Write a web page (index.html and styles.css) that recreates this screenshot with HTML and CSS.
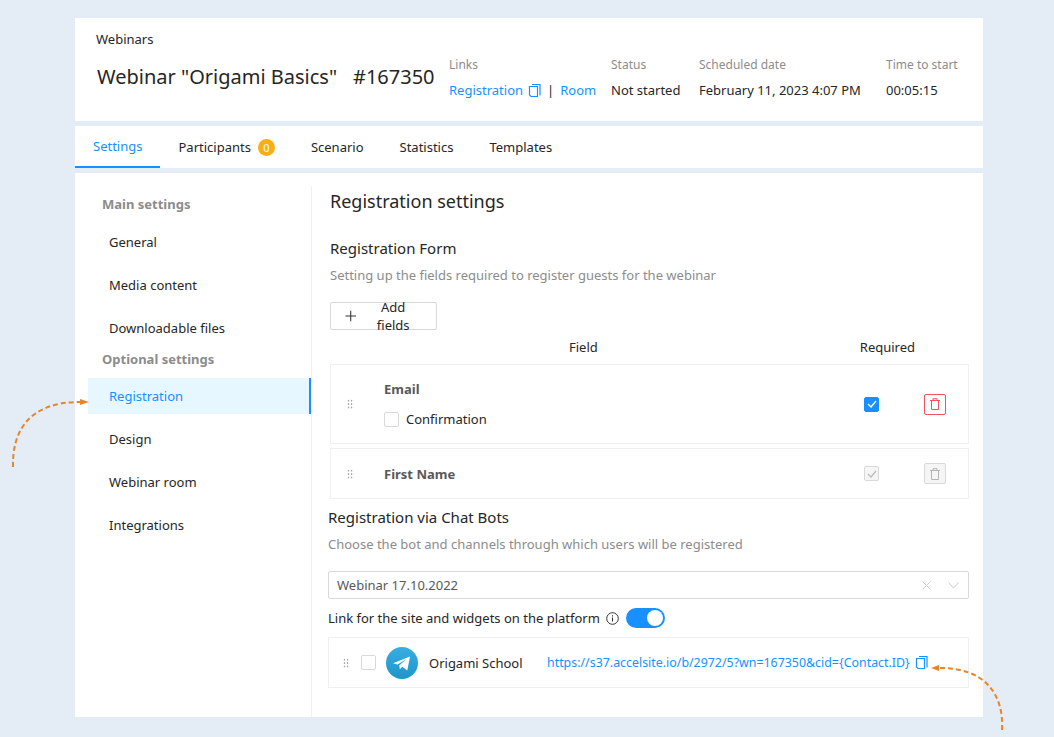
FILE: index.html
```html
<!DOCTYPE html>
<html>
<head>
  <title>Webinar settings</title>
  <link rel="stylesheet" href="styles.css">
</head>
<body>
  <svg class="arrow arrow-left" width="90" height="80" viewBox="0 0 90 80">
    <path d="M13 67 C12 30 30 2 80 2" fill="none" stroke="#e8852b" stroke-width="2" stroke-dasharray="5 3"/>
    <path d="M89 2 L80 -1 L80 5 Z" fill="#e8852b"/>
  </svg>
  <svg class="arrow arrow-right" width="80" height="70" viewBox="0 0 80 70">
    <path d="M72 66 C74 30 55 4 10 4" fill="none" stroke="#e8852b" stroke-width="2" stroke-dasharray="5 3"/>
    <path d="M1 4 L9 1 L9 7 Z" fill="#e8852b"/>
  </svg>

  <div class="page">
    <header class="head">
      <div class="crumb">Webinars</div>
      <div class="head-row">
        <h1 class="title">Webinar "Origami Basics"</h1>
        <div class="number">#167350</div>
        <div class="info info-links">
          <div class="info-label">Links</div>
          <div class="info-value">
            <a class="link">Registration</a>
            <svg class="copy" width="13" height="15" viewBox="0 0 13 15"><path d="M4 1.5h8v11" fill="none" stroke="#1890ff" stroke-width="1.2"/><path d="M1.5 3.5h8v10h-6.5l-1.5-1.5z" fill="none" stroke="#1890ff" stroke-width="1.2"/></svg>
            <span class="sep">|</span>
            <a class="link">Room</a>
          </div>
        </div>
        <div class="info info-status">
          <div class="info-label">Status</div>
          <div class="info-value">Not started</div>
        </div>
        <div class="info info-date">
          <div class="info-label">Scheduled date</div>
          <div class="info-value">February 11, 2023 4:07 PM</div>
        </div>
        <div class="info">
          <div class="info-label">Time to start</div>
          <div class="info-value">00:05:15</div>
        </div>
      </div>
    </header>

    <nav class="tabs">
      <a class="tab active">Settings</a>
      <a class="tab">Participants <span class="badge">0</span></a>
      <a class="tab">Scenario</a>
      <a class="tab">Statistics</a>
      <a class="tab">Templates</a>
    </nav>

    <div class="content">
      <aside class="side">
        <div class="side-title">Main settings</div>
        <a class="side-item">General</a>
        <a class="side-item">Media content</a>
        <a class="side-item">Downloadable files</a>
        <div class="side-title side-title-2">Optional settings</div>
        <a class="side-item active">Registration</a>
        <a class="side-item">Design</a>
        <a class="side-item">Webinar room</a>
        <a class="side-item">Integrations</a>
      </aside>

      <main class="main">
        <h2 class="main-title">Registration settings</h2>
        <h3 class="sub-title">Registration Form</h3>
        <p class="hint">Setting up the fields required to register guests for the webinar</p>
        <button class="btn">
          <svg width="12" height="12" viewBox="0 0 12 12"><path d="M6 .5v11M.5 6h11" stroke="#333" stroke-width="1.1"/></svg>
          Add fields
        </button>

        <div class="field-head">
          <span class="field-head-name">Field</span>
          <span class="field-head-req">Required</span>
        </div>

        <div class="field-row field-row-tall">
          <span class="drag"></span>
          <div class="field-name">
            <b>Email</b>
            <label class="confirm"><span class="check"></span>Confirmation</label>
          </div>
          <span class="check check-on">
            <svg width="10" height="8" viewBox="0 0 10 8"><path d="M1 4l3 3 5-6" fill="none" stroke="#fff" stroke-width="1.4"/></svg>
          </span>
          <span class="trash trash-red">
            <svg width="10" height="12" viewBox="0 0 10 12"><path d="M0 2.5h10M3 2.5V.7h4v1.8M1.5 2.5v9h7v-9" fill="none" stroke="#f5535b" stroke-width="1"/></svg>
          </span>
        </div>

        <div class="field-row">
          <span class="drag"></span>
          <div class="field-name"><b>First Name</b></div>
          <span class="check check-off">
            <svg width="10" height="8" viewBox="0 0 10 8"><path d="M1 4l3 3 5-6" fill="none" stroke="#bbb" stroke-width="1.3"/></svg>
          </span>
          <span class="trash trash-off">
            <svg width="10" height="12" viewBox="0 0 10 12"><path d="M0 2.5h10M3 2.5V.7h4v1.8M1.5 2.5v9h7v-9" fill="none" stroke="#b5b5b5" stroke-width="1"/></svg>
          </span>
        </div>

        <div class="bots">
          <h3 class="sub-title">Registration via Chat Bots</h3>
          <p class="hint">Choose the bot and channels through which users will be registered</p>

          <div class="select">
            <span>Webinar 17.10.2022</span>
            <svg class="select-x" width="9" height="9" viewBox="0 0 9 9"><path d="M.5.5l8 8M8.5.5l-8 8" stroke="#ccc" stroke-width="1"/></svg>
            <svg width="11" height="7" viewBox="0 0 11 7"><path d="M.5.5l5 5.5 5-5.5" fill="none" stroke="#ccc" stroke-width="1"/></svg>
          </div>

          <div class="platform">
            <span>Link for the site and widgets on the platform</span>
            <svg class="info-ic" width="13" height="13" viewBox="0 0 13 13"><circle cx="6.5" cy="6.5" r="5.8" fill="none" stroke="#333" stroke-width="1"/><path d="M6.5 5.5v4M6.5 3.2v1.2" stroke="#333" stroke-width="1.1"/></svg>
            <span class="toggle"><span class="knob"></span></span>
          </div>

          <div class="bot-row">
            <span class="drag"></span>
            <span class="check"></span>
            <svg class="tg" width="32" height="32" viewBox="0 0 32 32">
              <defs><linearGradient id="tg" x1="0" y1="0" x2="0" y2="1"><stop offset="0" stop-color="#37aee2"/><stop offset="1" stop-color="#1e96c8"/></linearGradient></defs>
              <circle cx="16" cy="16" r="16" fill="url(#tg)"/>
              <path d="M7 16.2 L24 9.5 L21.3 23.5 L16.3 19.8 L13.8 22.3 L13.3 18.3 L21 11.8 L11.5 17.6 Z" fill="#fff"/>
            </svg>
            <span class="bot-name">Origami School</span>
            <a class="link bot-url">https://s37.accelsite.io/b/2972/5?wn=167350&amp;cid={Contact.ID}</a>
            <svg class="copy" width="13" height="15" viewBox="0 0 13 15"><path d="M4 1.5h8v11" fill="none" stroke="#1890ff" stroke-width="1.2"/><path d="M1.5 3.5h8v10h-6.5l-1.5-1.5z" fill="none" stroke="#1890ff" stroke-width="1.2"/></svg>
          </div>
        </div>
      </main>
    </div>
  </div>
</body>
</html>
```

FILE: styles.css
```css
* {
  box-sizing: border-box;
}

html, body {
  height: 100%;
}

body {
  margin: 0;
  background-color: #e4ecf5;
  color: #262626;
  font-family: "Noto Sans", "Open Sans", sans-serif;
  font-size: 13px;
  overflow: hidden;
}

h1, h2, h3, p {
  margin: 0;
  font-weight: 400;
}

.page {
  width: 908px;
  margin: 18px 0 0 75px;
}

.arrow {
  position: absolute;
  overflow: visible;
}

.arrow-left {
  left: 0;
  top: 400px;
}

.arrow-right {
  left: 930px;
  top: 664px;
}

.link {
  color: #1890ff;
}

/* header */

.head {
  background: #fff;
  height: 103px;
  padding: 12px 22px 0 21px;
  margin-bottom: 5px;
}

.crumb {
  line-height: 18px;
}

.head-row {
  display: flex;
  align-items: flex-start;
  margin-top: 8px;
}

.title {
  font-size: 20px;
  line-height: 28px;
  width: 257px;
  padding-top: 7px;
  padding-left: 1px;
}

.number {
  font-size: 20px;
  line-height: 28px;
  width: 96px;
  padding-top: 7px;
}

.info-label {
  color: #8c8c8c;
  font-size: 12px;
  line-height: 18px;
  margin-bottom: 7px;
}

.info-value {
  line-height: 18px;
  display: flex;
  align-items: center;
  gap: 5px;
  white-space: nowrap;
}

.info-links {
  width: 162px;
}

.info-status {
  width: 88px;
}

.info-date {
  width: 187px;
}

.sep {
  margin: 0 1px;
}

/* tabs */

.tabs {
  background: #fff;
  height: 42px;
  display: flex;
  margin-bottom: 5px;
}

.tab {
  padding: 0 18px;
  line-height: 44px;
  height: 42px;
  display: flex;
  align-items: center;
  gap: 7px;
}

.tab.active {
  color: #1890ff;
  border-bottom: 2px solid #1890ff;
}

.badge {
  width: 17px;
  height: 17px;
  border-radius: 50%;
  background: #faad14;
  color: #fff;
  font-size: 11px;
  line-height: 17px;
  text-align: center;
}

/* content */

.content {
  background: #fff;
  height: 544px;
  display: flex;
  padding-top: 13px;
}

.side {
  width: 237px;
  padding: 9px 0 0 13px;
  border-right: 1px solid #f0f0f0;
}

.side-title {
  color: #8c8c8c;
  font-weight: 700;
  line-height: 18px;
  padding-left: 14px;
  margin-bottom: 11px;
}

.side-title-2 {
  margin-top: -3px;
  margin-bottom: 10px;
}

.side-item {
  display: block;
  height: 36px;
  line-height: 36px;
  padding-left: 21px;
  margin-bottom: 7px;
}

.side-item.active {
  background: #e6f7ff;
  color: #1890ff;
  border-right: 2px solid #1890ff;
}

.main {
  flex: 1;
  padding: 0 14px 0 18px;
}

.main-title {
  font-size: 18px;
  line-height: 30px;
}

.sub-title {
  font-size: 15px;
  line-height: 22px;
}

.main-title + .sub-title {
  margin-top: 21px;
}

.hint {
  color: #8c8c8c;
  line-height: 18px;
  margin-top: 7px;
}

.btn {
  display: flex;
  align-items: center;
  gap: 8px;
  height: 28px;
  width: 107px;
  margin-top: 18px;
  padding: 0 14px;
  background: #fff;
  border: 1px solid #d9d9d9;
  border-radius: 2px;
  color: #262626;
  font: inherit;
}

.field-head {
  display: flex;
  height: 34px;
  line-height: 34px;
}

.field-head-name {
  margin-left: 239px;
}

.field-head-req {
  margin-left: 262px;
}

.field-row {
  display: grid;
  grid-template-columns: 37px 1fr 60px 44px;
  align-items: center;
  height: 51px;
  margin-bottom: 4px;
  border: 1px solid #f0f0f0;
  padding-left: 16px;
}

.field-row-tall {
  height: 80px;
}

.field-name b {
  color: #595959;
  line-height: 18px;
  display: block;
}

.confirm {
  display: flex;
  align-items: center;
  gap: 7px;
  margin-top: 12px;
}

.drag {
  display: block;
  width: 7px;
  height: 10px;
  background-image: radial-gradient(circle, #a6a6a6 1px, transparent 1.1px);
  background-size: 3px 3.4px;
}

.check {
  width: 15px;
  height: 15px;
  border: 1px solid #d9d9d9;
  border-radius: 2px;
  display: flex;
  align-items: center;
  justify-content: center;
  flex: none;
}

.check-on {
  background: #1890ff;
  border-color: #1890ff;
}

.check-off {
  background: #f5f5f5;
}

.trash {
  width: 22px;
  height: 21px;
  border: 1px solid #d9d9d9;
  border-radius: 2px;
  display: flex;
  align-items: center;
  justify-content: center;
}

.trash-red {
  border-color: #f5535b;
}

.trash-off {
  background: #f5f5f5;
}

.bots {
  margin-left: -2px;
  margin-top: 7px;
}

.select {
  display: flex;
  align-items: center;
  height: 28px;
  margin-top: 18px;
  padding: 0 9px 0 8px;
  border: 1px solid #d9d9d9;
  border-radius: 2px;
  color: #595959;
}

.select span {
  flex: 1;
}

.select-x {
  margin-right: 17px;
}

.platform {
  display: flex;
  align-items: center;
  height: 20px;
  margin-top: 9px;
}

.info-ic {
  margin-left: 6px;
}

.toggle {
  width: 39px;
  height: 20px;
  margin-left: 7px;
  border-radius: 10px;
  background: #1890ff;
  display: flex;
  justify-content: flex-end;
  padding: 2px;
}

.knob {
  width: 16px;
  height: 16px;
  border-radius: 50%;
  background: #fff;
}

.bot-row {
  display: flex;
  align-items: center;
  height: 51px;
  margin-top: 9px;
  padding-left: 14px;
  border: 1px solid #f0f0f0;
}

.bot-row .check {
  margin-left: 11px;
}

.tg {
  margin-left: 10px;
}

.bot-name {
  margin-left: 11px;
  width: 118px;
}

.bot-url {
  font-size: 12.4px;
  margin-right: 5px;
}
```
